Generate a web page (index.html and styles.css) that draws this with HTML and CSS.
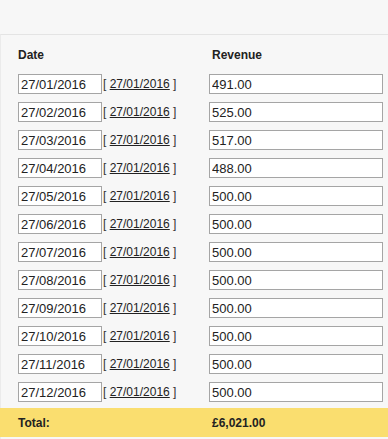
FILE: index.html
```html
<!DOCTYPE html>
<html>
<head>
<meta charset="utf-8">
<link rel="stylesheet" href="styles.css">
</head>
<body>
<div class="top"></div>
<div class="panel">
  <div class="grid head">
    <div class="h">Date</div>
    <div></div>
    <div class="h rev">Revenue</div>
  </div>
  <div class="grid rows">
    <input class="inp" value="27/01/2016"><span class="lnk">[ <a href="#">27/01/2016</a> ]</span><input class="inp" value="491.00">
    <input class="inp" value="27/02/2016"><span class="lnk">[ <a href="#">27/01/2016</a> ]</span><input class="inp" value="525.00">
    <input class="inp" value="27/03/2016"><span class="lnk">[ <a href="#">27/01/2016</a> ]</span><input class="inp" value="517.00">
    <input class="inp" value="27/04/2016"><span class="lnk">[ <a href="#">27/01/2016</a> ]</span><input class="inp" value="488.00">
    <input class="inp" value="27/05/2016"><span class="lnk">[ <a href="#">27/01/2016</a> ]</span><input class="inp" value="500.00">
    <input class="inp" value="27/06/2016"><span class="lnk">[ <a href="#">27/01/2016</a> ]</span><input class="inp" value="500.00">
    <input class="inp" value="27/07/2016"><span class="lnk">[ <a href="#">27/01/2016</a> ]</span><input class="inp" value="500.00">
    <input class="inp" value="27/08/2016"><span class="lnk">[ <a href="#">27/01/2016</a> ]</span><input class="inp" value="500.00">
    <input class="inp" value="27/09/2016"><span class="lnk">[ <a href="#">27/01/2016</a> ]</span><input class="inp" value="500.00">
    <input class="inp" value="27/10/2016"><span class="lnk">[ <a href="#">27/01/2016</a> ]</span><input class="inp" value="500.00">
    <input class="inp" value="27/11/2016"><span class="lnk">[ <a href="#">27/01/2016</a> ]</span><input class="inp" value="500.00">
    <input class="inp" value="27/12/2016"><span class="lnk">[ <a href="#">27/01/2016</a> ]</span><input class="inp" value="500.00">
  </div>
  <div class="grid total">
    <div class="h">Total:</div>
    <div></div>
    <div class="h rev">£6,021.00</div>
  </div>
</div>
</body>
</html>
```
FILE: styles.css
```css
html, body {
  margin: 0;
  padding: 0;
  background: #f7f7f7;
  font-family: "Liberation Sans", Arial, sans-serif;
  color: #222;
}
.top {
  height: 34px;
}
.panel {
  border-top: 1px solid #e4e4e4;
  border-left: 1px solid #ebebeb;
  height: 404px;
}
.grid {
  display: grid;
  grid-template-columns: 84px 107px 174px;
  padding-left: 17px;
}
.head {
  padding-top: 13px;
  height: 26px;
}
.h {
  font-size: 12px;
  font-weight: bold;
  line-height: 15px;
}
.rev {
  padding-left: 3px;
}
.rows {
  row-gap: 8px;
  margin-bottom: 6px;
}
.inp {
  box-sizing: border-box;
  width: 100%;
  height: 20px;
  margin: 0;
  padding: 0 2px;
  border: 1px solid #a5a5a5;
  background: #fff;
  font-family: "Liberation Sans", Arial, sans-serif;
  font-size: 13px;
  color: #222;
  outline: none;
}
.lnk {
  font-size: 12px;
  line-height: 20px;
  padding-left: 1px;
  color: #333;
}
.lnk a {
  color: #222;
  text-decoration: underline;
}
.total {
  background: #fade6f;
  height: 29px;
  align-items: center;
  margin-left: -1px;
  padding-left: 18px;
  padding-top: 1px;
  box-sizing: border-box;
}
```
